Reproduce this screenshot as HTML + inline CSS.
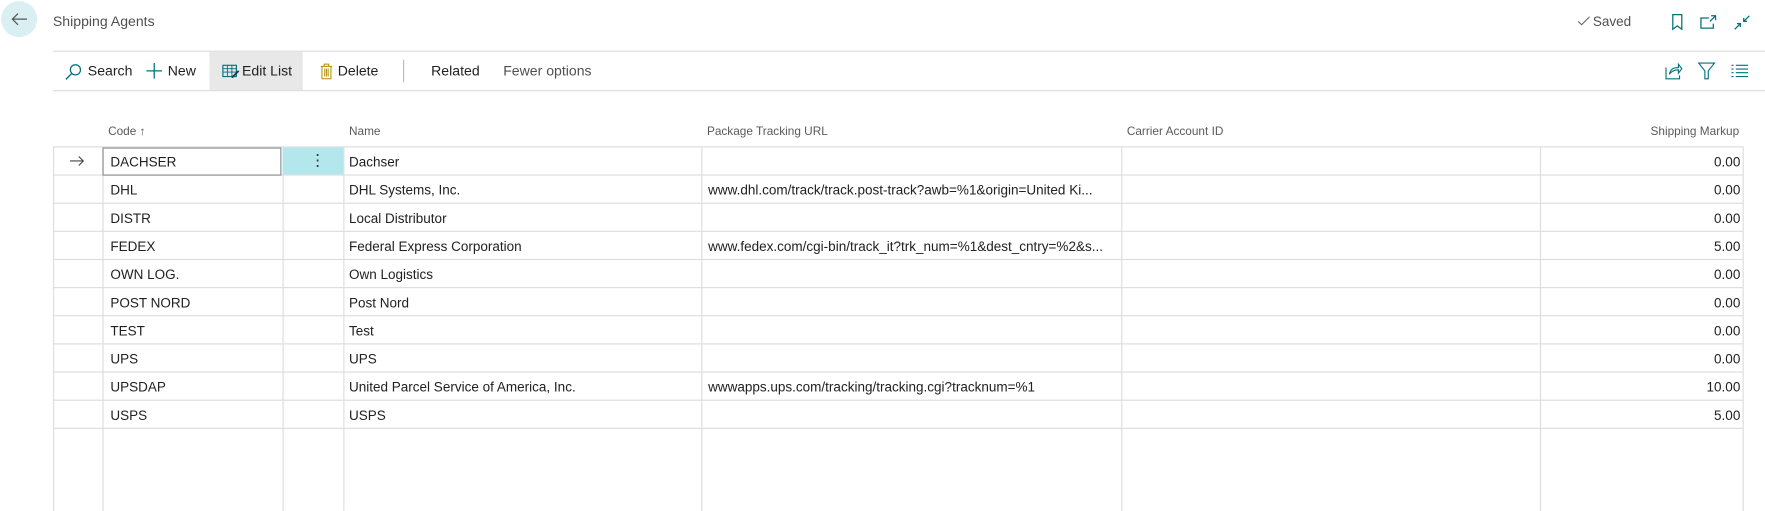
<!DOCTYPE html>
<html><head><meta charset="utf-8"><style>
*{box-sizing:border-box;margin:0;padding:0}
html,body{width:1765px;height:454px;overflow:hidden;background:#fff}
#w{position:absolute;left:0;top:0;width:1568px;height:404px;transform:scale(1.1257);transform-origin:0 0;font-family:"Liberation Sans",sans-serif;color:#212121}
.a{position:absolute;white-space:nowrap}
.hl{position:absolute;height:1px;background:#dcdcdc}
.vl{position:absolute;width:1px;background:#dcdcdc}
.t{font-size:12px}
.h{font-size:10.5px;color:#5a5a5a}
.tb{font-size:12.5px;color:#212121}
</style></head><body><div id="w">
<div class="a" style="left:1px;top:1px;width:32px;height:32px;border-radius:50%;background:#d9eff2"></div>
<svg class="a" style="left:9px;top:10px" width="16" height="14" viewBox="0 0 16 14"><path d="M15 7H2M7 2L2 7l5 5" fill="none" stroke="#555" stroke-width="1.1"/></svg>
<div class="a" style="left:47px;top:12px;font-size:12.5px;color:#505050">Shipping Agents</div>
<svg class="a" style="left:1401px;top:14px" width="12" height="10"><path d="M1 5l3 3 7-7" fill="none" stroke="#666" stroke-width="1"/></svg>
<div class="a" style="left:1415px;top:12px;font-size:12px;color:#505050">Saved</div>
<svg class="a" style="left:1484px;top:12px" width="12" height="16"><path d="M2 1h8v13l-4-3-4 3z" fill="none" stroke="#00707a" stroke-width="1.1"/></svg>
<svg class="a" style="left:1510px;top:13px" width="16" height="14"><path d="M8 3H1v9h11V8M10 1h4v4M14 1l-5 5" fill="none" stroke="#00707a" stroke-width="1.1"/></svg>
<svg class="a" style="left:1540px;top:12px" width="16" height="16"><path d="M1 14l5-5M3 9h3v3M14 2l-5 5M9 4v3h3" fill="none" stroke="#00707a" stroke-width="1.1"/></svg>
<div class="hl" style="left:47px;top:45px;width:1710px"></div>
<div class="hl" style="left:47px;top:80px;width:1710px"></div>
<div class="a" style="left:186px;top:46px;width:83px;height:34px;background:#e8e8e8"></div>
<svg class="a" style="left:57px;top:56px" width="16" height="16"><circle cx="10" cy="6" r="4.5" fill="none" stroke="#00707a" stroke-width="1.1"/><path d="M7 9l-5.5 5.5" stroke="#00707a" stroke-width="1.2"/></svg>
<div class="a tb" style="left:78px;top:56px">Search</div>
<svg class="a" style="left:130px;top:56px" width="14" height="14"><path d="M7 0v14M0 7h14" stroke="#00707a" stroke-width="1.1"/></svg>
<div class="a tb" style="left:149px;top:56px">New</div>
<svg class="a" style="left:197px;top:57px" width="16" height="13"><rect x="1" y="1" width="12" height="10" fill="none" stroke="#00707a"/><path d="M1 4h12M1 7h12M5 1v10M9 1v10" stroke="#00707a" stroke-width=".8"/><path d="M9 12l6-6" stroke="#333" stroke-width="1.6"/></svg>
<div class="a tb" style="left:215px;top:56px">Edit List</div>
<svg class="a" style="left:284px;top:56px" width="12" height="15"><path d="M1 3h10M4 3V1h4v2M2 3v11h8V3M4.5 5v7M6 5v7M7.5 5v7" fill="none" stroke="#b38b00" stroke-width=".9"/></svg>
<div class="a tb" style="left:300px;top:56px">Delete</div>
<div class="vl" style="left:358px;top:53px;height:20px;background:#bbb"></div>
<div class="a tb" style="left:383px;top:56px">Related</div>
<div class="a tb" style="left:447px;top:56px;color:#505050">Fewer options</div>
<svg class="a" style="left:1479px;top:55px" width="16" height="16"><path d="M1 5v10h12v-3M4 11c1-5 4-6 8-6V2l3 4-3 4V7c-3 0-6 1-8 4z" fill="none" stroke="#00707a" stroke-width="1"/></svg>
<svg class="a" style="left:1508px;top:55px" width="16" height="16"><path d="M1 1h14l-5.5 7v7h-3V8z" fill="none" stroke="#00707a" stroke-width="1"/></svg>
<svg class="a" style="left:1538px;top:57px" width="15" height="12"><path d="M0 1h2M0 4.3h2M0 7.6h2M0 11h2M4 1h11M4 4.3h11M4 7.6h11M4 11h11" stroke="#00707a" stroke-width="1"/></svg>

<div class="a h" style="left:96px;top:111px">Code &#8593;</div>
<div class="a h" style="left:310px;top:111px">Name</div>
<div class="a h" style="left:628px;top:111px">Package Tracking URL</div>
<div class="a h" style="left:1001px;top:111px">Carrier Account ID</div>
<div class="a h" style="left:1437px;top:111px;width:108px;text-align:right">Shipping Markup</div>

<div class="hl" style="left:47px;top:130px;width:1501px"></div>
<div class="hl" style="left:47px;top:155px;width:1501px"></div>
<div class="hl" style="left:47px;top:180px;width:1501px"></div>
<div class="hl" style="left:47px;top:205px;width:1501px"></div>
<div class="hl" style="left:47px;top:230px;width:1501px"></div>
<div class="hl" style="left:47px;top:255px;width:1501px"></div>
<div class="hl" style="left:47px;top:280px;width:1501px"></div>
<div class="hl" style="left:47px;top:305px;width:1501px"></div>
<div class="hl" style="left:47px;top:330px;width:1501px"></div>
<div class="hl" style="left:47px;top:355px;width:1501px"></div>
<div class="hl" style="left:47px;top:380px;width:1501px"></div>
<div class="vl" style="left:47px;top:130px;height:324px"></div>
<div class="vl" style="left:91px;top:130px;height:324px"></div>
<div class="vl" style="left:251px;top:130px;height:324px"></div>
<div class="vl" style="left:305px;top:130px;height:324px"></div>
<div class="vl" style="left:623px;top:130px;height:324px"></div>
<div class="vl" style="left:996px;top:130px;height:324px"></div>
<div class="vl" style="left:1368px;top:130px;height:324px"></div>
<div class="vl" style="left:1548px;top:130px;height:324px"></div>

<div class="a" style="left:251px;top:131px;width:54px;height:24px;background:#b3e7ec"></div>
<div class="a" style="left:91px;top:131px;width:159px;height:25px;border:1px solid #8a8a8a"></div>
<div class="a" style="left:275px;top:134px;font-size:14px;color:#333">&#8942;</div>
<svg class="a" style="left:62px;top:138px" width="14" height="10"><path d="M0 5h12M8 1l4 4-4 4" fill="none" stroke="#444" stroke-width="1"/></svg>

<div class="a t" style="left:98px;top:137px">DACHSER</div><div class="a t" style="left:310px;top:137px">Dachser</div><div class="a t" style="left:1446px;top:137px;width:100px;text-align:right">0.00</div>
<div class="a t" style="left:98px;top:162px">DHL</div><div class="a t" style="left:310px;top:162px">DHL Systems, Inc.</div><div class="a t" style="left:629px;top:162px">www.dhl.com/track/track.post-track?awb=%1&amp;origin=United Ki...</div><div class="a t" style="left:1446px;top:162px;width:100px;text-align:right">0.00</div>
<div class="a t" style="left:98px;top:187px">DISTR</div><div class="a t" style="left:310px;top:187px">Local Distributor</div><div class="a t" style="left:1446px;top:187px;width:100px;text-align:right">0.00</div>
<div class="a t" style="left:98px;top:212px">FEDEX</div><div class="a t" style="left:310px;top:212px">Federal Express Corporation</div><div class="a t" style="left:629px;top:212px">www.fedex.com/cgi-bin/track_it?trk_num=%1&amp;dest_cntry=%2&amp;s...</div><div class="a t" style="left:1446px;top:212px;width:100px;text-align:right">5.00</div>
<div class="a t" style="left:98px;top:237px">OWN LOG.</div><div class="a t" style="left:310px;top:237px">Own Logistics</div><div class="a t" style="left:1446px;top:237px;width:100px;text-align:right">0.00</div>
<div class="a t" style="left:98px;top:262px">POST NORD</div><div class="a t" style="left:310px;top:262px">Post Nord</div><div class="a t" style="left:1446px;top:262px;width:100px;text-align:right">0.00</div>
<div class="a t" style="left:98px;top:287px">TEST</div><div class="a t" style="left:310px;top:287px">Test</div><div class="a t" style="left:1446px;top:287px;width:100px;text-align:right">0.00</div>
<div class="a t" style="left:98px;top:312px">UPS</div><div class="a t" style="left:310px;top:312px">UPS</div><div class="a t" style="left:1446px;top:312px;width:100px;text-align:right">0.00</div>
<div class="a t" style="left:98px;top:337px">UPSDAP</div><div class="a t" style="left:310px;top:337px">United Parcel Service of America, Inc.</div><div class="a t" style="left:629px;top:337px">wwwapps.ups.com/tracking/tracking.cgi?tracknum=%1</div><div class="a t" style="left:1446px;top:337px;width:100px;text-align:right">10.00</div>
<div class="a t" style="left:98px;top:362px">USPS</div><div class="a t" style="left:310px;top:362px">USPS</div><div class="a t" style="left:1446px;top:362px;width:100px;text-align:right">5.00</div>
</div></body></html>
